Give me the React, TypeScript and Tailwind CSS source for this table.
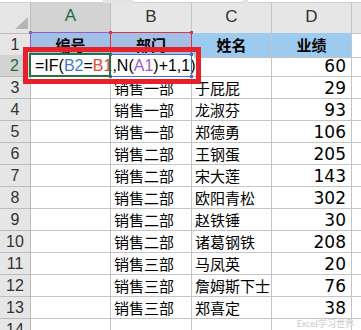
import React from "react";

const CJK = '"Noto Sans CJK SC", "Noto Sans", sans-serif';
const LAT = '"Liberation Sans", Arial, sans-serif';
const NUM = '"DejaVu Sans", "Liberation Sans", sans-serif';

type Row = { b: string; c: string; d: string };

const rows: Row[] = [
  { b: "", c: "", d: "60" },
  { b: "销售一部", c: "于屁屁", d: "29" },
  { b: "销售一部", c: "龙淑芬", d: "93" },
  { b: "销售一部", c: "郑德勇", d: "106" },
  { b: "销售二部", c: "王钢蛋", d: "205" },
  { b: "销售二部", c: "宋大莲", d: "143" },
  { b: "销售二部", c: "欧阳青松", d: "302" },
  { b: "销售二部", c: "赵铁锤", d: "30" },
  { b: "销售二部", c: "诸葛钢铁", d: "208" },
  { b: "销售三部", c: "马凤英", d: "20" },
  { b: "销售三部", c: "詹姆斯下士", d: "76" },
  { b: "销售三部", c: "郑喜定", d: "38" },
  { b: "", c: "", d: "" },
];

const grid = "grid grid-cols-[31px_80px_81px_80px_80px_1fr]";

function RefBox({ cls, color }: { cls: string; color: string }) {
  return (
    <div className={`absolute ${cls}`} style={{ border: `1.5px solid ${color}` }}>
      <div className="absolute -left-[2px] -top-[2px] w-[3px] h-[3px]" style={{ background: color }} />
      <div className="absolute -right-[2px] -top-[2px] w-[3px] h-[3px]" style={{ background: color }} />
      <div className="absolute -left-[2px] -bottom-[2px] w-[3px] h-[3px]" style={{ background: color }} />
      <div className="absolute -right-[2px] -bottom-[2px] w-[3px] h-[3px]" style={{ background: color }} />
    </div>
  );
}

export default function App() {
  return (
    <div className="relative w-[361px] h-[330px] overflow-hidden bg-white">
      {/* top strip */}
      <div className="flex h-[3px] bg-[#e3e3e3]">
        <div className="w-[103px] bg-white border-b border-[#d0d0d0]" />
        <div className="w-[30px]" />
        <div className="w-[110px] bg-white border-b border-[#d0d0d0]" />
        <div className="w-[5px]" />
        <div className="flex-1 bg-white border-b border-[#d0d0d0]" />
      </div>

      {/* column headers */}
      <div className={`${grid} h-[30px] bg-[#e6e6e6]`} style={{ fontFamily: LAT }}>
        <div className="relative border-r border-b border-[#bcbcbc]">
          <svg className="absolute left-[15px] top-[14px]" width="13" height="12" viewBox="0 0 13 12">
            <polygon points="13,0 13,12 0,12" fill="#b5b5b5" />
          </svg>
        </div>
        <div className="flex items-end justify-center pb-[3px] text-[17px] text-[#1d6a40] bg-[#d3d3d3] border-r border-[#bcbcbc] border-b-2 border-b-[#217346]">
          A
        </div>
        {["B", "C", "D"].map((l) => (
          <div key={l} className="flex items-end justify-center pb-[3px] text-[17px] text-[#333] border-r border-b border-[#c4c4c4]">
            {l}
          </div>
        ))}
        <div className="border-b border-[#c4c4c4]" />
      </div>

      {/* header row 1 */}
      <div className={`${grid} h-[22px]`}>
        <div className="flex items-center justify-center text-[16px] text-[#333] bg-[#e6e6e6] border-r border-b border-[#bcbcbc]" style={{ fontFamily: LAT }}>
          1
        </div>
        {["编号", "部门", "姓名", "业绩"].map((t, i) => (
          <div
            key={t}
            className={`flex items-center justify-center text-[15px] leading-[20px] font-bold text-black border-r border-b border-[#c4c4c4] ${i < 2 ? "bg-[#a2bfe5]" : "bg-[#9dcaef]"}`}
            style={{ fontFamily: CJK }}
          >
            {t}
          </div>
        ))}
        <div className="border-b border-[#c4c4c4]" />
      </div>

      {/* data rows */}
      {rows.map((r, i) => {
        const n = i + 2;
        const sel = n === 2;
        return (
          <div key={n} className={`${grid} h-[22px]`}>
            <div
              className={`flex items-center justify-center text-[16px] leading-[20px] border-b border-[#bcbcbc] ${sel ? "bg-[#d3d3d3] text-[#1d6a40] border-r-2 border-r-[#217346]" : "bg-[#e6e6e6] text-[#333] border-r"}`}
              style={{ fontFamily: LAT }}
            >
              {n}
            </div>
            <div className="border-r border-b border-[#c4c4c4]" />
            <div className="flex items-center pl-[3px] text-[15px] leading-[20px] text-black border-r border-b border-[#c4c4c4] whitespace-nowrap" style={{ fontFamily: CJK }}>
              {r.b}
            </div>
            <div className="flex items-center pl-[3px] text-[15px] leading-[20px] text-black border-r border-b border-[#c4c4c4] whitespace-nowrap overflow-visible" style={{ fontFamily: CJK }}>
              {r.c}
            </div>
            <div className="flex items-center justify-end pr-[5px] text-[17px] leading-[20px] text-black border-r border-b border-[#c4c4c4]" style={{ fontFamily: NUM }}>
              {r.d}
            </div>
            <div className="border-b border-[#c4c4c4]" />
          </div>
        );
      })}

      {/* reference boxes */}
      <RefBox cls="left-[30px] top-[32px] w-[81px] h-[23px]" color="#8f5fcb" />
      <RefBox cls="left-[110px] top-[32px] w-[82px] h-[23px]" color="#d8344c" />

      {/* cell editor */}
      <div className="absolute left-[31px] top-[55px] w-[163px] h-[21px] bg-white flex items-center pl-[4px] text-[16px] text-black whitespace-nowrap" style={{ fontFamily: LAT }}>
        <span>=IF(</span>
        <span className="text-[#3f7bd0]">B2</span>
        <span>=</span>
        <span className="text-[#e24a3b]">B1</span>
        <span>,N(</span>
        <span className="text-[#a55ac8]">A1</span>
        <span>)+1,1)</span>
        <span className="inline-block w-px h-[17px] bg-black ml-px" />
      </div>
      <RefBox cls="left-[110px] top-[54px] w-[82px] h-[23px]" color="#3f72c8" />
      <div className="absolute left-[29px] top-[53px] w-[82px] h-[24px] border-2 border-[#217346]" />

      {/* annotation box */}
      <div className="absolute left-[23px] top-[47px] w-[178px] h-[37px] border-[5px] border-[#e8202a]" />

      {/* watermark */}
      <div
        className="absolute right-[7px] top-[319px] text-[9px] leading-[10px] text-[#c9c9c9] whitespace-nowrap"
        style={{ fontFamily: CJK, textShadow: "0 0 1px #fff" }}
      >
        Excel学习世界
      </div>
    </div>
  );
}
